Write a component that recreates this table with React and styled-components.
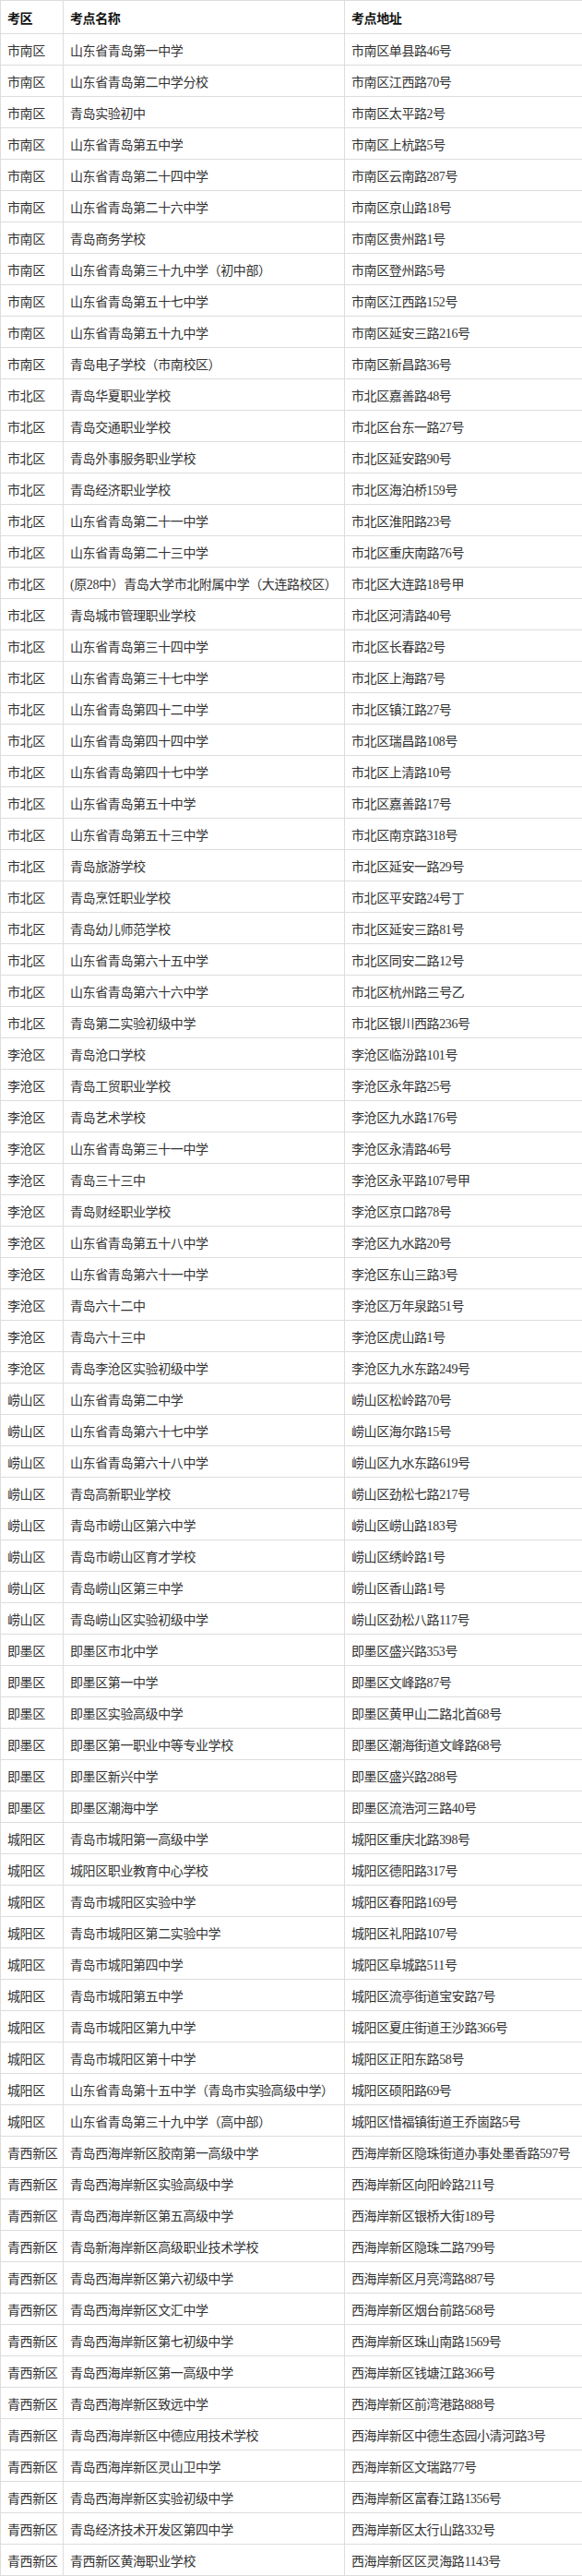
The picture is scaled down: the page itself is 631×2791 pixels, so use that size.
import React from "react";
import styled, { createGlobalStyle } from "styled-components";

const GlobalStyle = createGlobalStyle`
  html, body { margin: 0; padding: 0; background: #ffffff; }
  body { font-family: "Liberation Serif", "Noto Sans CJK SC", serif; }
`;

const rows = [
  ["市南区", "山东省青岛第一中学", "市南区单县路46号"],
  ["市南区", "山东省青岛第二中学分校", "市南区江西路70号"],
  ["市南区", "青岛实验初中", "市南区太平路2号"],
  ["市南区", "山东省青岛第五中学", "市南区上杭路5号"],
  ["市南区", "山东省青岛第二十四中学", "市南区云南路287号"],
  ["市南区", "山东省青岛第二十六中学", "市南区京山路18号"],
  ["市南区", "青岛商务学校", "市南区贵州路1号"],
  ["市南区", "山东省青岛第三十九中学（初中部）", "市南区登州路5号"],
  ["市南区", "山东省青岛第五十七中学", "市南区江西路152号"],
  ["市南区", "山东省青岛第五十九中学", "市南区延安三路216号"],
  ["市南区", "青岛电子学校（市南校区）", "市南区新昌路36号"],
  ["市北区", "青岛华夏职业学校", "市北区嘉善路48号"],
  ["市北区", "青岛交通职业学校", "市北区台东一路27号"],
  ["市北区", "青岛外事服务职业学校", "市北区延安路90号"],
  ["市北区", "青岛经济职业学校", "市北区海泊桥159号"],
  ["市北区", "山东省青岛第二十一中学", "市北区淮阳路23号"],
  ["市北区", "山东省青岛第二十三中学", "市北区重庆南路76号"],
  ["市北区", "(原28中）青岛大学市北附属中学（大连路校区）", "市北区大连路18号甲"],
  ["市北区", "青岛城市管理职业学校", "市北区河清路40号"],
  ["市北区", "山东省青岛第三十四中学", "市北区长春路2号"],
  ["市北区", "山东省青岛第三十七中学", "市北区上海路7号"],
  ["市北区", "山东省青岛第四十二中学", "市北区镇江路27号"],
  ["市北区", "山东省青岛第四十四中学", "市北区瑞昌路108号"],
  ["市北区", "山东省青岛第四十七中学", "市北区上清路10号"],
  ["市北区", "山东省青岛第五十中学", "市北区嘉善路17号"],
  ["市北区", "山东省青岛第五十三中学", "市北区南京路318号"],
  ["市北区", "青岛旅游学校", "市北区延安一路29号"],
  ["市北区", "青岛烹饪职业学校", "市北区平安路24号丁"],
  ["市北区", "青岛幼儿师范学校", "市北区延安三路81号"],
  ["市北区", "山东省青岛第六十五中学", "市北区同安二路12号"],
  ["市北区", "山东省青岛第六十六中学", "市北区杭州路三号乙"],
  ["市北区", "青岛第二实验初级中学", "市北区银川西路236号"],
  ["李沧区", "青岛沧口学校", "李沧区临汾路101号"],
  ["李沧区", "青岛工贸职业学校", "李沧区永年路25号"],
  ["李沧区", "青岛艺术学校", "李沧区九水路176号"],
  ["李沧区", "山东省青岛第三十一中学", "李沧区永清路46号"],
  ["李沧区", "青岛三十三中", "李沧区永平路107号甲"],
  ["李沧区", "青岛财经职业学校", "李沧区京口路78号"],
  ["李沧区", "山东省青岛第五十八中学", "李沧区九水路20号"],
  ["李沧区", "山东省青岛第六十一中学", "李沧区东山三路3号"],
  ["李沧区", "青岛六十二中", "李沧区万年泉路51号"],
  ["李沧区", "青岛六十三中", "李沧区虎山路1号"],
  ["李沧区", "青岛李沧区实验初级中学", "李沧区九水东路249号"],
  ["崂山区", "山东省青岛第二中学", "崂山区松岭路70号"],
  ["崂山区", "山东省青岛第六十七中学", "崂山区海尔路15号"],
  ["崂山区", "山东省青岛第六十八中学", "崂山区九水东路619号"],
  ["崂山区", "青岛高新职业学校", "崂山区劲松七路217号"],
  ["崂山区", "青岛市崂山区第六中学", "崂山区崂山路183号"],
  ["崂山区", "青岛市崂山区育才学校", "崂山区绣岭路1号"],
  ["崂山区", "青岛崂山区第三中学", "崂山区香山路1号"],
  ["崂山区", "青岛崂山区实验初级中学", "崂山区劲松八路117号"],
  ["即墨区", "即墨区市北中学", "即墨区盛兴路353号"],
  ["即墨区", "即墨区第一中学", "即墨区文峰路87号"],
  ["即墨区", "即墨区实验高级中学", "即墨区黄甲山二路北首68号"],
  ["即墨区", "即墨区第一职业中等专业学校", "即墨区潮海街道文峰路68号"],
  ["即墨区", "即墨区新兴中学", "即墨区盛兴路288号"],
  ["即墨区", "即墨区潮海中学", "即墨区流浩河三路40号"],
  ["城阳区", "青岛市城阳第一高级中学", "城阳区重庆北路398号"],
  ["城阳区", "城阳区职业教育中心学校", "城阳区德阳路317号"],
  ["城阳区", "青岛市城阳区实验中学", "城阳区春阳路169号"],
  ["城阳区", "青岛市城阳区第二实验中学", "城阳区礼阳路107号"],
  ["城阳区", "青岛市城阳第四中学", "城阳区阜城路511号"],
  ["城阳区", "青岛市城阳第五中学", "城阳区流亭街道宝安路7号"],
  ["城阳区", "青岛市城阳区第九中学", "城阳区夏庄街道王沙路366号"],
  ["城阳区", "青岛市城阳区第十中学", "城阳区正阳东路58号"],
  ["城阳区", "山东省青岛第十五中学（青岛市实验高级中学）", "城阳区硕阳路69号"],
  ["城阳区", "山东省青岛第三十九中学（高中部）", "城阳区惜福镇街道王乔崮路5号"],
  ["青西新区", "青岛西海岸新区胶南第一高级中学", "西海岸新区隐珠街道办事处墨香路597号"],
  ["青西新区", "青岛西海岸新区实验高级中学", "西海岸新区向阳岭路211号"],
  ["青西新区", "青岛西海岸新区第五高级中学", "西海岸新区银桥大街189号"],
  ["青西新区", "青岛新海岸新区高级职业技术学校", "西海岸新区隐珠二路799号"],
  ["青西新区", "青岛西海岸新区第六初级中学", "西海岸新区月亮湾路887号"],
  ["青西新区", "青岛西海岸新区文汇中学", "西海岸新区烟台前路568号"],
  ["青西新区", "青岛西海岸新区第七初级中学", "西海岸新区珠山南路1569号"],
  ["青西新区", "青岛西海岸新区第一高级中学", "西海岸新区钱塘江路366号"],
  ["青西新区", "青岛西海岸新区致远中学", "西海岸新区前湾港路888号"],
  ["青西新区", "青岛西海岸新区中德应用技术学校", "西海岸新区中德生态园小清河路3号"],
  ["青西新区", "青岛西海岸新区灵山卫中学", "西海岸新区文瑞路77号"],
  ["青西新区", "青岛西海岸新区实验初级中学", "西海岸新区富春江路1356号"],
  ["青西新区", "青岛经济技术开发区第四中学", "西海岸新区太行山路332号"],
  ["青西新区", "青西新区黄海职业学校", "西海岸新区区灵海路1143号"],
];

const Table = styled.table`
  width: 631px;
  border-collapse: collapse;
  table-layout: fixed;
  font-family: "Liberation Serif", "Noto Sans CJK SC", serif;
  font-size: 14px;
  letter-spacing: -0.4px;
  color: #333333;
`;

const Col = styled.col`
  width: ${(p) => p.$w}px;
`;

const HeadCell = styled.th`
  height: 35px;
  padding: 0 0 0 7px;
  text-align: left;
  font-weight: 700;
  color: #111111;
  border: 1px solid #dddddd;
  white-space: nowrap;
  overflow: hidden;
`;

const Cell = styled.td`
  height: 33px;
  padding: 0 0 0 7px;
  text-align: left;
  border: 1px solid #dddddd;
  white-space: nowrap;
  overflow: hidden;
`;

export default function App() {
  return (
    <>
      <GlobalStyle />
      <Table>
        <colgroup>
          <Col $w={68} />
          <Col $w={305} />
          <Col $w={258} />
        </colgroup>
        <thead>
          <tr>
            <HeadCell>考区</HeadCell>
            <HeadCell>考点名称</HeadCell>
            <HeadCell>考点地址</HeadCell>
          </tr>
        </thead>
        <tbody>
          {rows.map((r, i) => (
            <tr key={i}>
              <Cell>{r[0]}</Cell>
              <Cell>{r[1]}</Cell>
              <Cell>{r[2]}</Cell>
            </tr>
          ))}
        </tbody>
      </Table>
    </>
  );
}
